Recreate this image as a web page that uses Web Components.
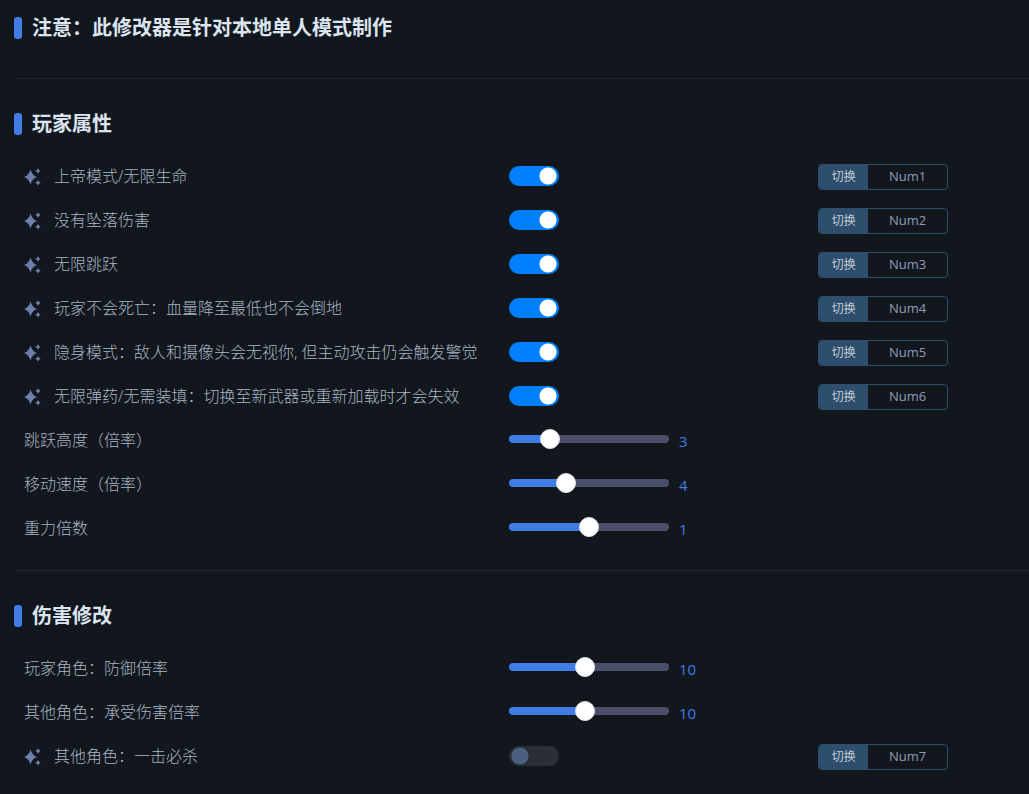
<!DOCTYPE html>
<html lang="zh-CN">
<head>
<meta charset="utf-8">
<meta name="viewport" content="width=device-width, initial-scale=1">
<title>修改器</title>
<style>
body{
    margin: 0;
    background: #12171d;
    color: #a8b4c3;
    font-family: "Open Sans", "Noto Sans CJK SC", sans-serif;
    font-size: 16px;
}
</style>
</head>
<body>
<trainer-panel>
    <trainer-section heading="注意：此修改器是针对本地单人模式制作"></trainer-section>
    <trainer-section heading="玩家属性">
        <toggle-row hotkey="Num1" checked>上帝模式/无限生命</toggle-row>
        <toggle-row hotkey="Num2" checked>没有坠落伤害</toggle-row>
        <toggle-row hotkey="Num3" checked>无限跳跃</toggle-row>
        <toggle-row hotkey="Num4" checked>玩家不会死亡：血量降至最低也不会倒地</toggle-row>
        <toggle-row hotkey="Num5" checked>隐身模式：敌人和摄像头会无视你, 但主动攻击仍会触发警觉</toggle-row>
        <toggle-row hotkey="Num6" checked>无限弹药/无需装填：切换至新武器或重新加载时才会失效</toggle-row>
        <slider-row min="1" max="10" value="3">跳跃高度（倍率）</slider-row>
        <slider-row min="1" max="10" value="4">移动速度（倍率）</slider-row>
        <slider-row min="0" max="2" value="1">重力倍数</slider-row>
    </trainer-section>
    <trainer-section heading="伤害修改">
        <slider-row min="1" max="20" value="10">玩家角色：防御倍率</slider-row>
        <slider-row min="1" max="20" value="10">其他角色：承受伤害倍率</slider-row>
        <toggle-row hotkey="Num7">其他角色：一击必杀</toggle-row>
    </trainer-section>
</trainer-panel>

<script>
const template_panel = document.createElement("template");
template_panel.innerHTML = `
<style>
:host{
    display: block;
    padding-left: 14px;
}
::slotted(trainer-section:not(:first-child)){
    border-top: 1px solid #22272b;
}
</style>
<main><slot></slot></main>
`;

class TrainerPanel extends HTMLElement {
  constructor() {
    super();
    this.attachShadow({ mode: "open" });
    this.shadowRoot.appendChild(template_panel.content.cloneNode(true));
  }
}

const template_section = document.createElement("template");
template_section.innerHTML = `
<style>
:host{
    display: block;
    padding: 30px 0 19px;
}
:host(:first-child){
    padding-top: 13px;
}
h2{
    display: flex;
    align-items: center;
    gap: 10px;
    margin: 0 0 16px;
    color: #dbe4f0;
    font-size: 20px;
    line-height: 30px;
    font-weight: 700;
}
h2::before{
    content: "";
    width: 8px;
    height: 22px;
    border-radius: 3px;
    background: #3f7ce6;
}
</style>
<section aria-labelledby="title">
    <h2 id="title"></h2>
    <slot></slot>
</section>
`;

class TrainerSection extends HTMLElement {
  constructor() {
    super();
    this.attachShadow({ mode: "open" });
    this.shadowRoot.appendChild(template_section.content.cloneNode(true));
  }
  connectedCallback() {
    this.shadowRoot.querySelector("h2").textContent = this.getAttribute("heading");
  }
}

// shared by both kinds of row
const row_style = `
:host{
    display: grid;
    grid-template-columns: 69fr 44fr 30fr;
    align-items: center;
    height: 44px;
    padding-left: 10px;
}
label{
    display: flex;
    align-items: center;
    gap: 12px;
    line-height: 24px;
    font-weight: 300;
    white-space: nowrap;
}
label span{
    padding-bottom: 2px;
}
input{
    display: block;
    appearance: none;
    margin: 0;
    cursor: pointer;
}
`;

const template_toggle = document.createElement("template");
template_toggle.innerHTML = `
<style>
${row_style}
svg{
    width: 18px;
    height: 18px;
    fill: #6c7fae;
}
input{
    width: 50px;
    height: 20px;
    margin-bottom: 2px;
    border-radius: 10px;
    background: radial-gradient(circle at 11px 10px, #4b5f83 8px, transparent 9px) #2a2e35;
}
input:checked{
    background: radial-gradient(circle at 39px 10px, #fff 8px, transparent 9px) #0080ff;
}
.hotkey{
    display: flex;
    width: 130px;
    height: 26px;
    box-sizing: border-box;
    border: 1px solid #2d4e6c;
    border-radius: 4px;
    overflow: hidden;
}
button{
    border: 0;
    padding: 0;
    background: none;
    color: #8f9bb9;
    font: inherit;
    font-size: 12px;
    line-height: 24px;
    cursor: pointer;
}
.switch{
    flex: 0 0 49px;
    background: #2d4e6c;
    color: #c5ccd3;
}
.key{
    flex: 1;
    padding-bottom: 2px;
    font-size: 13px;
    line-height: 22px;
}
</style>
<label for="toggle">
    <svg viewBox="0 0 18 18" aria-hidden="true">
        <path d="M6.500 1.500Q8 7.300 13 9Q8 10.700 6.500 16.500Q5 10.700 0 9Q5 7.300 6.500 1.500Z"/>
        <path d="M14 .3Q14.800 2.200 16.700 3Q14.800 3.800 14 5.700Q13.200 3.800 11.300 3Q13.200 2.200 14 .3Z"/>
        <path d="M14 12Q14.800 14 16.800 14.800Q14.800 15.600 14 17.600Q13.200 15.600 11.200 14.800Q13.200 14 14 12Z"/>
    </svg>
    <span><slot></slot></span>
</label>
<input type="checkbox" role="switch" id="toggle">
<div class="hotkey">
    <button type="button" class="switch">切换</button>
    <button type="button" class="key"></button>
</div>
`;

class ToggleRow extends HTMLElement {
  constructor() {
    super();
    this.attachShadow({ mode: "open" });
    this.shadowRoot.appendChild(template_toggle.content.cloneNode(true));
  }
  connectedCallback() {
    const input = this.shadowRoot.querySelector("input");
    input.checked = this.hasAttribute("checked");
    input.setAttribute("aria-label", this.textContent);
    this.shadowRoot.querySelector(".key").textContent = this.getAttribute("hotkey");
    this.shadowRoot.querySelector(".switch").addEventListener("click", () => input.click());
  }
}

const template_slider = document.createElement("template");
template_slider.innerHTML = `
<style>
${row_style}
.control{
    display: flex;
    align-items: center;
    gap: 10px;
}
input{
    width: 160px;
    height: 20px;
    margin-bottom: 4px;
    background: none;
}
input::-webkit-slider-runnable-track{
    height: 8px;
    border-radius: 4px;
    background: linear-gradient(to right, #3f7ce6 var(--fill), #4b4e6a var(--fill));
}
input::-webkit-slider-thumb{
    appearance: none;
    width: 20px;
    height: 20px;
    margin-top: -6px;
    box-sizing: border-box;
    border: 1px solid #dfe8ee;
    border-radius: 50%;
    background: #fff;
}
output{
    color: #3f7ce6;
    font-size: 15px;
    line-height: 24px;
}
</style>
<label for="range"><span><slot></slot></span></label>
<div class="control">
    <input type="range" id="range">
    <output for="range"></output>
</div>
`;

class SliderRow extends HTMLElement {
  constructor() {
    super();
    this.attachShadow({ mode: "open" });
    this.shadowRoot.appendChild(template_slider.content.cloneNode(true));
  }
  connectedCallback() {
    const input = this.shadowRoot.querySelector("input");
    input.min = this.getAttribute("min");
    input.max = this.getAttribute("max");
    input.value = this.getAttribute("value");
    input.setAttribute("aria-label", this.textContent);
    input.addEventListener("input", () => this.update());
    this.update();
  }
  update() {
    const input = this.shadowRoot.querySelector("input");
    const percent = (input.value - input.min) / (input.max - input.min) * 100;
    input.style.setProperty("--fill", percent + "%");
    this.shadowRoot.querySelector("output").textContent = input.value;
  }
}

window.customElements.define("trainer-panel", TrainerPanel);
window.customElements.define("trainer-section", TrainerSection);
window.customElements.define("toggle-row", ToggleRow);
window.customElements.define("slider-row", SliderRow);
</script>
</body>
</html>
